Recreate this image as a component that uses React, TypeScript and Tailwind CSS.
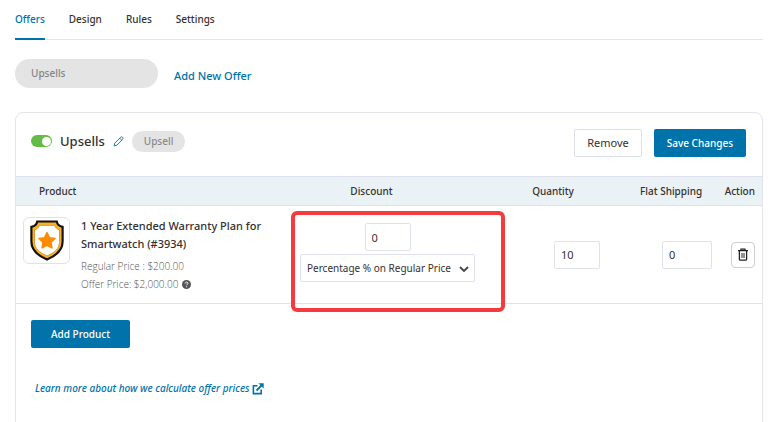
import { useState } from "react";

const tabs = ["Offers", "Design", "Rules", "Settings"];

const ShieldLogo = () => (
  <svg viewBox="0 0 36 42" className="h-[41px] w-9" aria-hidden="true">
    <path
      d="M8 1.500h20c.4 3 2.600 5 6 5.500V22c0 9.500-6.500 14.500-16 18.500C8.500 36.500 2 31.500 2 22V7c3.400-.5 5.600-2.500 6-5.500z"
      fill="#fbb02b"
      stroke="#111"
      strokeWidth="2.200"
    />
    <path
      d="M10.200 5.500h15.600c.9 2.500 2.600 4 5 4.600V22c0 7.500-4.800 11.200-12.800 14.800C10 33.200 5.200 29.500 5.200 22V10.100c2.400-.6 4.100-2.100 5-4.600z"
      fill="#fff"
      stroke="#d99a24"
      strokeWidth="1"
    />
    <path
      d="M18 13l2.500 5.100 5.700.8-4.100 4 1 5.700-5.100-2.700-5.100 2.700 1-5.700-4.100-4 5.700-.8z"
      fill="#ff8c00"
      stroke="#ff8c00"
      strokeWidth="1.500"
      strokeLinejoin="round"
    />
  </svg>
);

const PencilIcon = () => (
  <svg viewBox="0 0 12 12" className="h-[11px] w-[11px]" fill="none" stroke="#0073aa" strokeWidth="1" strokeLinejoin="round">
    <path d="M1.200 10.800l.7-3L8.300 1.400a1.500 1.500 0 0 1 2.200 2.200L4.200 10z" />
    <path d="M7.300 2.400l2.200 2.200" />
  </svg>
);

const TrashIcon = () => (
  <svg viewBox="0 0 12 13" className="h-[13px] w-3" fill="none" stroke="#222" strokeWidth="1.300">
    <path d="M1 2.700h10M4 2.500V1.200h4v1.300" />
    <path d="M2.400 3v8.200c0 .6.400 1 1 1h5.200c.6 0 1-.4 1-1V3" />
    <path d="M5 5v5M7 5v5" strokeWidth="1" />
  </svg>
);

const ExternalIcon = () => (
  <svg viewBox="0 0 12 12" className="size-3" fill="none" stroke="#0073aa" strokeWidth="1.600">
    <path d="M5.500 2.800H1.400v7.800h7.800V6.500" />
    <path d="M4.500 7.500l5-5" strokeWidth="1.800" />
    <path d="M6.500.3h5.200v5.200z" fill="#0073aa" stroke="none" />
  </svg>
);

const HelpIcon = () => (
  <svg viewBox="0 0 10 10" className="size-[9px]" role="img" aria-label="Help">
    <circle cx="5" cy="5" r="5" fill="#555" />
    <path d="M3.500 3.900c0-2 3.100-2 3.100-.2 0 1-1.500 1.100-1.500 2.200M5.100 7v1.100" fill="none" stroke="#fff" strokeWidth="1.100" />
  </svg>
);

export default function App() {
  const [activeTab, setActiveTab] = useState("Offers");
  const [enabled, setEnabled] = useState(true);

  return (
    <main className="bg-white pr-[5px] pl-[15px] font-['Noto_Sans',sans-serif] text-[10px] text-[#353030]">
      <nav className="flex h-10 gap-6 border-b border-[#e2e4e7]">
        {tabs.map((tab) => (
          <button
            key={tab}
            type="button"
            onClick={() => setActiveTab(tab)}
            className={
              tab === activeTab
                ? "-mb-px border-b-2 border-[#0073aa] font-medium text-[#0073aa]"
                : "-mb-px border-b-2 border-transparent font-medium"
            }
          >
            {tab}
          </button>
        ))}
      </nav>

      <div className="mt-[19px] flex items-center gap-4">
        <button type="button" className="h-[29px] w-[143px] rounded-full bg-[#e4e4e4] px-4 text-left font-medium text-[#858585]">
          Upsells
        </button>
        <a href="#new" className="pt-1.5 text-[11px] font-medium text-[#0073aa]">
          Add New Offer
        </a>
      </div>

      <section className="mt-6 rounded-t-lg border border-[#e2e4ee] pb-12">
        <header className="flex h-[63px] items-start justify-between pt-4 pr-4 pl-[15px]">
          <div className="flex h-6 items-center">
            <input
              id="enabled"
              type="checkbox"
              aria-label="Enable Upsells"
              checked={enabled}
              onChange={(e) => setEnabled(e.target.checked)}
              className="flex h-3 w-[21px] appearance-none items-center rounded-full bg-gray-300 px-px before:size-[9px] before:rounded-full before:bg-white checked:justify-end checked:bg-[#64bb46]"
            />
            <h1 className="ml-2 text-[13px] leading-5 font-medium">Upsells</h1>
            <button type="button" aria-label="Edit name" className="ml-2">
              <PencilIcon />
            </button>
            <span className="ml-2 rounded-full bg-[#e4e4e4] px-3 leading-[21px] font-medium text-[#8a8a8a]">
              Upsell
            </span>
          </div>
          <div className="flex gap-3">
            <button type="button" className="h-7 rounded-xs border border-[#dcdfeb] px-3 text-[11px]">
              Remove
            </button>
            <button type="button" className="h-7 rounded-xs bg-[#0073aa] px-[13px] font-medium text-white">
              Save Changes
            </button>
          </div>
        </header>

        <table className="w-full table-fixed border-collapse">
          <colgroup>
            <col />
            <col className="w-[253px]" />
            <col className="w-[126px]" />
            <col className="w-[72px]" />
            <col className="w-[50px]" />
          </colgroup>
          <thead>
            <tr className="h-[29px] border-y border-[#dfe1ee] bg-[#eaf2f6] whitespace-nowrap">
              <th className="pl-[23px] text-left font-medium">Product</th>
              <th className="pr-8 text-center font-medium">Discount</th>
              <th className="pr-12 text-center font-medium">Quantity</th>
              <th className="pr-2.5 text-right font-medium">Flat Shipping</th>
              <th className="pr-[7px] text-right font-medium">Action</th>
            </tr>
          </thead>
          <tbody>
            <tr className="h-[98px] border-b border-[#dfe1ee]">
              <td className="pt-[11px] pl-[7px] align-top">
                <div className="-mr-4 flex gap-[11px]">
                  <div className="flex size-[47px] shrink-0 items-center justify-center rounded-md border border-[#dfe1ee]">
                    <ShieldLogo />
                  </div>
                  <div>
                    <p className="text-[11px] leading-[18px] font-medium">1 Year Extended Warranty Plan for Smartwatch (#3934)</p>
                    <div className="mt-1 font-['Open_Sans',sans-serif] leading-[18px] font-light text-[#555]">
                      <p>Regular Price : $200.00</p>
                      <p className="flex items-center gap-1">
                        Offer Price: $2,000.00 <HelpIcon />
                      </p>
                    </div>
                  </div>
                </div>
              </td>
              <td className="pt-[17px] align-top">
                <div className="relative flex flex-col items-center gap-[3px]">
                  <input
                    aria-label="Discount"
                    defaultValue="0"
                    className="h-7 w-[46px] rounded-xs border border-[#dfe1ee] px-1.5 text-[11px]"
                  />
                  <div className="relative w-[175px]">
                    <select
                      aria-label="Discount type"
                      className="block h-7 w-full appearance-none rounded-xs border border-[#dfe1ee] pl-1.5"
                    >
                      <option>Percentage % on Regular Price</option>
                    </select>
                    <svg viewBox="0 0 10 6" className="pointer-events-none absolute top-3 right-1.5 h-1.5 w-2.5" fill="none" stroke="#444" strokeWidth="1.800">
                      <path d="M1 1l4 4 4-4" />
                    </svg>
                  </div>
                  {/* highlight frame around the discount fields */}
                  <div className="pointer-events-none absolute -top-3 left-[30px] h-[101px] w-[214px] rounded-md border-4 border-[#f43b3e]" />
                </div>
              </td>
              <td className="text-center">
                <input
                  aria-label="Quantity"
                  defaultValue="10"
                  className="h-7 w-[46px] rounded-xs border border-[#dfe1ee] px-1.5 text-[11px]"
                />
              </td>
              <td className="text-right">
                <input
                  aria-label="Flat shipping"
                  defaultValue="0"
                  className="h-7 w-[50px] rounded-xs border border-[#dfe1ee] px-1.5 text-[11px]"
                />
              </td>
              <td className="pr-[7px]">
                <button
                  type="button"
                  aria-label="Delete product"
                  className="ml-auto flex h-[26px] w-6 items-center justify-center rounded-sm border border-[#cfcfcf]"
                >
                  <TrashIcon />
                </button>
              </td>
            </tr>
          </tbody>
        </table>

        <div className="pt-4 pl-[15px]">
          <button type="button" className="h-7 rounded-xs bg-[#0073aa] px-5 font-medium text-white">
            Add Product
          </button>
          <p className="mt-[33px] pl-1">
            <a href="#learn" className="inline-flex items-center gap-0.5 font-medium text-[#0073aa] italic">
              Learn more about how we calculate offer prices
              <ExternalIcon />
            </a>
          </p>
        </div>
      </section>
    </main>
  );
}
